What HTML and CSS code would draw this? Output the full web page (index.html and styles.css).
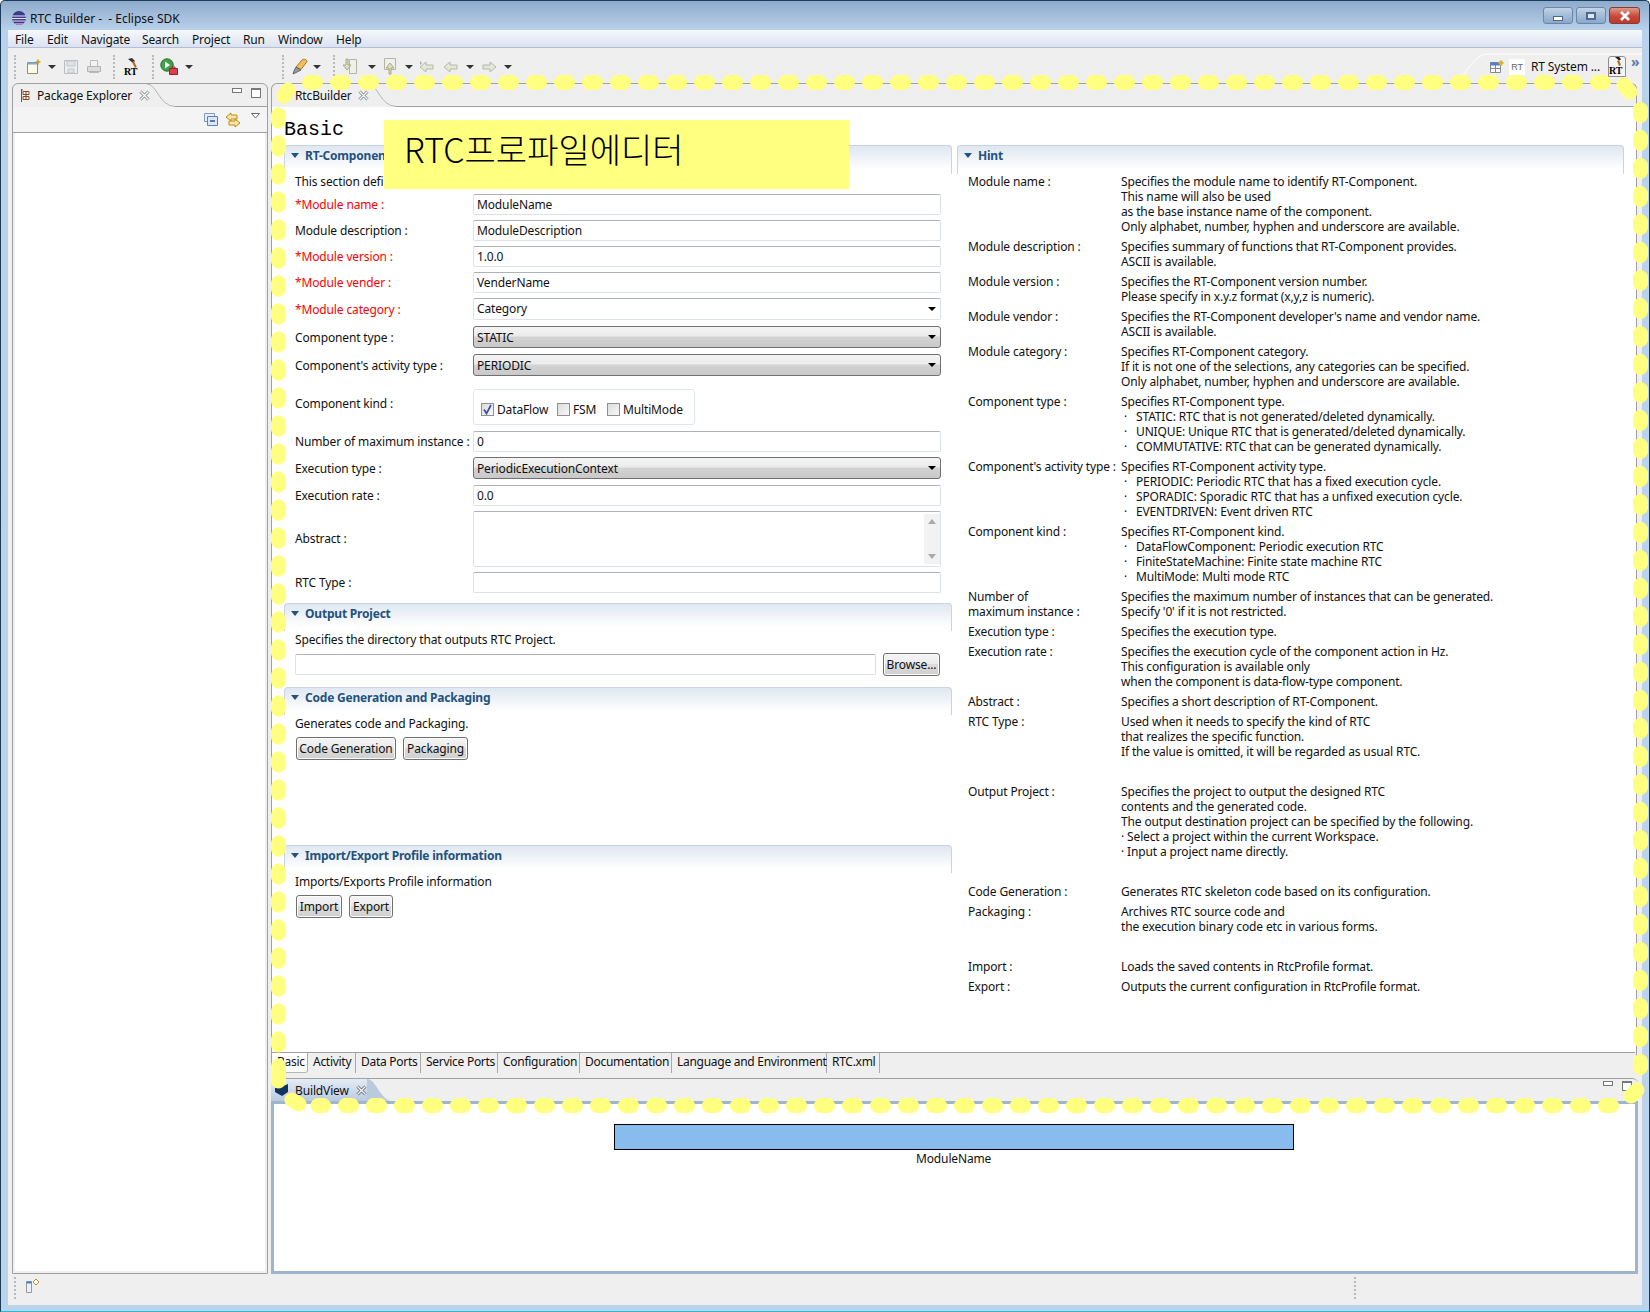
FILE: index.html
```html
<!DOCTYPE html>
<html lang="en">
<head>
<meta charset="utf-8">
<title>RTC Builder - Eclipse SDK</title>
<link rel="stylesheet" href="styles.css">
</head>
<body>
<div class="window">
  <header class="titlebar">
    <svg class="title-icon" width="16" height="16" viewBox="0 0 16 16"><circle cx="8" cy="8" r="7" fill="#3b3a8c"/><path d="M1 6h14M1 8.500h14M1.600 11h12.800" stroke="#e8e4f4" stroke-width="1.100"/><path d="M3 13a7 7 0 0 0 10 0z" fill="#b08fc8"/></svg>
    <span class="title-text">RTC Builder -&nbsp;&nbsp;- Eclipse SDK</span>
    <div class="winbtns">
      <div class="winbtn"><span class="glyph-min"></span></div>
      <div class="winbtn"><span class="glyph-max"></span></div>
      <div class="winbtn winbtn-close"><svg width="14" height="10" viewBox="0 0 14 10"><path d="M3 1l8 8M11 1l-8 8" stroke="#fff" stroke-width="2.600"/></svg></div>
    </div>
  </header>
  <nav class="menubar">
    <span class="m-file">File</span><span class="m-edit">Edit</span><span class="m-nav">Navigate</span><span class="m-search">Search</span><span class="m-project">Project</span><span class="m-run">Run</span><span class="m-window">Window</span><span>Help</span>
  </nav>
  <div class="toolbar">
    <i class="grip"></i>
    <svg class="ti" width="16" height="16" viewBox="0 0 16 16"><path d="M1.500 3.500h10v11h-10z" fill="#fdfbe8" stroke="#8a8f6a"/><path d="M1.500 3.500h10v2h-10z" fill="#7fa6d8"/><path d="M12 .5v5M9.500 3h5" stroke="#d09a20" stroke-width="1.600"/></svg>
    <i class="drop d1"></i>
    <svg class="ti t-save" width="16" height="16" viewBox="0 0 16 16"><path d="M1.500 1.500h13v13h-13z" fill="#eceff0" stroke="#b8bcbf"/><path d="M4 2h8v5H4zM5 10h6v4H5z" fill="#dfe2e4" stroke="#c2c5c8"/></svg>
    <svg class="ti t-print" width="16" height="16" viewBox="0 0 16 16"><path d="M4.500 1.500h7v6h-7z" fill="#f2f2f2" stroke="#bbb"/><path d="M1.500 7.500h13v5h-13z" fill="#dcdcdc" stroke="#b5b5b5"/><path d="M3 13.500h10" stroke="#bbb"/></svg>
    <i class="grip g2"></i>
    <svg class="ti t-rt" width="18" height="18" viewBox="0 0 18 18"><path d="M5 1l4-1 3 3-2 2z" fill="#333"/><path d="M9 4l1.800-1 3 6-1.800 1z" fill="#b8692a"/><text x="1" y="17" class="rt-mark">RT</text></svg>
    <i class="grip g3"></i>
    <svg class="ti t-run" width="19" height="18" viewBox="0 0 19 18"><circle cx="7" cy="7" r="6.200" fill="#3fa24a" stroke="#1f6e2c"/><path d="M5 3.600l5 3.400-5 3.400z" fill="#fff"/><path d="M9.500 10.500h8v6h-8z" fill="#d8414a" stroke="#922"/><path d="M12 10.500V9h3v1.500" fill="none" stroke="#922"/></svg>
    <i class="drop d2"></i>
    <i class="grip g4"></i>
    <svg class="ti t-pin" width="18" height="17" viewBox="0 0 18 17"><path d="M5 9l6-7c2-1.500 5-.5 5 1.500l-6 8z" fill="#f0c060" stroke="#a77a20"/><path d="M5 9l5 3-5 2.500-3 1.500 1-3z" fill="#9a9aa0" stroke="#666"/></svg>
    <i class="drop d3"></i>
    <i class="grip g5"></i>
    <svg class="ti t-a" width="15" height="17" viewBox="0 0 15 17"><path d="M6.500 1.500h7v14h-7z" fill="#f0f0ea" stroke="#b5b5a5"/><path d="M5 1v6h3l-4 5-4-5h3V1z" fill="#dfe0c0" stroke="#a8a88a"/></svg>
    <i class="drop d4"></i>
    <svg class="ti t-b" width="15" height="17" viewBox="0 0 15 17"><path d="M2.500 .5h11v11h-11z" fill="#f0f0ea" stroke="#b5b5a5"/><path d="M7 16v-6H4l4-5 4 5H9v6z" fill="#dfe0c0" stroke="#a8a88a"/></svg>
    <i class="drop d5"></i>
    <svg class="ti t-c" width="16" height="14" viewBox="0 0 16 14"><path d="M8 2L2 7l6 5V9h7V5H8z" fill="#e4e8d8" stroke="#b4b8a8"/><path d="M2 1l2 2-2 2" fill="#aaa"/></svg>
    <svg class="ti t-d" width="15" height="14" viewBox="0 0 15 14"><path d="M7 2L1 7l6 5V9h7V5H7z" fill="#e4e8d8" stroke="#b4b8a8"/></svg>
    <i class="drop d6"></i>
    <svg class="ti t-e" width="15" height="14" viewBox="0 0 15 14"><path d="M8 2l6 5-6 5V9H1V5h7z" fill="#e4e8d8" stroke="#b4b8a8"/></svg>
    <i class="drop d7"></i>
    <div class="perspective">
      <svg class="persp-curve" width="190" height="32" viewBox="0 0 190 32"><path d="M0 31c14 0 18-26 36-27h154" fill="none" stroke="#fff" stroke-width="1"/></svg>
      <svg class="persp-ico" width="14" height="13" viewBox="0 0 14 13"><path d="M.5 2.500h10v10H.500z" fill="#fff" stroke="#888"/><path d="M.5 2.500h10v3H.5z" fill="#4f81c8"/><path d="M5.500 5v7M1 8.500h9" stroke="#888"/><path d="M11 0l3 3-3 3-3-3z" fill="#e0b030"/></svg>
      <span class="rt-chip">RT</span>
      <span class="persp-label">RT System ...</span>
      <span class="persp-btn"><svg width="16" height="18" viewBox="0 0 16 18"><path d="M6 0l4-.5 2 3-2 1z" fill="#222"/><path d="M8 4l2-1 2 5-2 1z" fill="#b8692a"/><text x="0" y="17" class="rt-mark">RT</text></svg></span>
      <span class="persp-more">»</span>
    </div>
  </div>

  <div class="workbench">
    <section class="pane pane-left">
      <div class="pane-head">
        <div class="tab">
          <svg class="pkg-ico" width="10" height="13" viewBox="0 0 10 13"><path d="M1.500 0v13M1 1h2M3 2.500h6v3H3zM3 7.500h6v3H3zM6 2.500v8" fill="none" stroke="#8a4a28"/></svg>
          <span>Package Explorer</span>
          <svg class="close-x" width="11" height="11" viewBox="0 0 11 11"><path d="M1.500 1.500l8 8M9.500 1.500l-8 8" stroke="#7f8a8f" stroke-width="3"/><path d="M1.500 1.500l8 8M9.500 1.500l-8 8" stroke="#fff" stroke-width="1.200"/></svg>
        </div>
        <svg class="tab-curve" width="28" height="23" viewBox="0 0 28 23"><path d="M0 0c10 0 12 22 28 22.500" fill="none" stroke="#b5b5b5"/></svg>
        <div class="head-fill">
          <span class="btn-min"></span><span class="btn-max"></span>
        </div>
      </div>
      <div class="pane-tools">
        <svg width="14" height="13" viewBox="0 0 14 13"><path d="M.5.5h10v8h-10z" fill="#e8eef6" stroke="#7f9bc0"/><path d="M3.500 3.500h10v9h-10z" fill="#dbe7f5" stroke="#5c82b5"/><path d="M6 8h5" stroke="#234a80" stroke-width="1.400"/></svg>
        <svg class="link-ico" width="16" height="16" viewBox="0 0 16 16"><path d="M6 1L1 5l5 4V7h6V3H6z" fill="#fbe8a8" stroke="#c08a18"/><path d="M10 7l5 4-5 4v-2H4V9h6z" fill="#fbe8a8" stroke="#c08a18"/></svg>
        <svg class="menu-tri" width="9" height="6" viewBox="0 0 9 6"><path d="M.5.500h8L4.500 5z" fill="#fff" stroke="#666"/></svg>
      </div>
      <div class="pane-body"></div>
    </section>

    <div class="right-stack">
      <section class="pane pane-editor">
        <div class="pane-head">
          <div class="tab tab-editor">
            <svg class="ed-ico" width="12" height="12" viewBox="0 0 12 12"><path d="M2 10l6-7 2 2-6 6z" fill="#c88a30"/></svg>
            <span>RtcBuilder</span>
            <svg class="close-x" width="11" height="11" viewBox="0 0 11 11"><path d="M1.500 1.500l8 8M9.500 1.500l-8 8" stroke="#7f8a8f" stroke-width="3"/><path d="M1.500 1.500l8 8M9.500 1.500l-8 8" stroke="#fff" stroke-width="1.200"/></svg>
          </div>
          <svg class="tab-curve" width="28" height="23" viewBox="0 0 28 23"><path d="M0 0c10 0 12 22 28 22.500" fill="none" stroke="#b5b5b5"/></svg>
          <div class="head-fill"></div>
        </div>
        <div class="form-page">
          <h1 class="page-title">Basic</h1>
          <div class="columns">
            <div class="col-left">
              <section class="sec">
                <h2 class="sec-head sec-head-first"><i class="twist"></i>RT-Component Basic Profile</h2>
                <p class="sec-desc">This section defines basic profile</p>
                <div class="row"><label class="req">*Module name :</label><div class="field">ModuleName</div></div>
                <div class="row"><label>Module description :</label><div class="field">ModuleDescription</div></div>
                <div class="row"><label class="req">*Module version :</label><div class="field">1.0.0</div></div>
                <div class="row"><label class="req">*Module vender :</label><div class="field">VenderName</div></div>
                <div class="row row-c"><label class="req">*Module category :</label><div class="field combo-edit">Category<i class="arrow"></i></div></div>
                <div class="row row-c"><label>Component type :</label><div class="combo">STATIC<i class="arrow"></i></div></div>
                <div class="row row-c row-before-group"><label>Component's activity type :</label><div class="combo">PERIODIC<i class="arrow"></i></div></div>
                <div class="row row-group"><label class="lab-group">Component kind :</label>
                  <div class="group">
                    <span class="check on"><svg width="11" height="11" viewBox="0 0 11 11"><path d="M2 5.500l2.500 4L9 1" fill="none" stroke="#3a4fa0" stroke-width="1.700"/></svg></span><span class="ck-l1">DataFlow</span>
                    <span class="check"></span><span class="ck-l2">FSM</span>
                    <span class="check"></span><span>MultiMode</span>
                  </div>
                </div>
                <div class="row"><label>Number of maximum instance :</label><div class="field">0</div></div>
                <div class="row row-c"><label>Execution type :</label><div class="combo">PeriodicExecutionContext<i class="arrow"></i></div></div>
                <div class="row"><label>Execution rate :</label><div class="field">0.0</div></div>
                <div class="row row-area"><label class="lab-area">Abstract :</label><div class="field area"><div class="vscroll"><i class="up"></i><i class="down"></i></div></div></div>
                <div class="row row-last"><label>RTC Type :</label><div class="field"></div></div>
              </section>
              <section class="sec sec-output">
                <h2 class="sec-head"><i class="twist"></i>Output Project</h2>
                <p class="sec-desc">Specifies the directory that outputs RTC Project.</p>
                <div class="browse-row"><div class="field grow"></div><button class="btn btn-browse">Browse...</button></div>
              </section>
              <section class="sec sec-code">
                <h2 class="sec-head"><i class="twist"></i>Code Generation and Packaging</h2>
                <p class="sec-desc">Generates code and Packaging.</p>
                <div class="btn-row"><button class="btn b-code">Code Generation</button><button class="btn b-pack">Packaging</button></div>
              </section>
              <section class="sec">
                <h2 class="sec-head"><i class="twist"></i>Import/Export Profile information</h2>
                <p class="sec-desc">Imports/Exports Profile information</p>
                <div class="btn-row"><button class="btn b-imp">Import</button><button class="btn b-exp">Export</button></div>
              </section>
            </div>
            <section class="sec col-right">
              <h2 class="sec-head sec-head-first"><i class="twist"></i>Hint</h2>
              <dl class="hints">
                <dt>Module name :</dt><dd>Specifies the module name to identify RT-Component.<br>This name will also be used<br>as the base instance name of the component.<br>Only alphabet, number, hyphen and underscore are available.</dd>
                <dt>Module description :</dt><dd>Specifies summary of functions that RT-Component provides.<br>ASCII is available.</dd>
                <dt>Module version :</dt><dd>Specifies the RT-Component version number.<br>Please specify in x.y.z format (x,y,z is numeric).</dd>
                <dt>Module vendor :</dt><dd>Specifies the RT-Component developer's name and vendor name.<br>ASCII is available.</dd>
                <dt>Module category :</dt><dd>Specifies RT-Component category.<br>If it is not one of the selections, any categories can be specified.<br>Only alphabet, number, hyphen and underscore are available.</dd>
                <dt>Component type :</dt><dd>Specifies RT-Component type.<br>&nbsp;·&nbsp;&nbsp;&nbsp;STATIC: RTC that is not generated/deleted dynamically.<br>&nbsp;·&nbsp;&nbsp;&nbsp;UNIQUE: Unique RTC that is generated/deleted dynamically.<br>&nbsp;·&nbsp;&nbsp;&nbsp;COMMUTATIVE: RTC that can be generated dynamically.</dd>
                <dt>Component's activity type :</dt><dd>Specifies RT-Component activity type.<br>&nbsp;·&nbsp;&nbsp;&nbsp;PERIODIC: Periodic RTC that has a fixed execution cycle.<br>&nbsp;·&nbsp;&nbsp;&nbsp;SPORADIC: Sporadic RTC that has a unfixed execution cycle.<br>&nbsp;·&nbsp;&nbsp;&nbsp;EVENTDRIVEN: Event driven RTC</dd>
                <dt>Component kind :</dt><dd>Specifies RT-Component kind.<br>&nbsp;·&nbsp;&nbsp;&nbsp;DataFlowComponent: Periodic execution RTC<br>&nbsp;·&nbsp;&nbsp;&nbsp;FiniteStateMachine: Finite state machine RTC<br>&nbsp;·&nbsp;&nbsp;&nbsp;MultiMode: Multi mode RTC</dd>
                <dt>Number of<br>maximum instance :</dt><dd>Specifies the maximum number of instances that can be generated.<br>Specify '0' if it is not restricted.</dd>
                <dt>Execution type :</dt><dd>Specifies the execution type.</dd>
                <dt>Execution rate :</dt><dd>Specifies the execution cycle of the component action in Hz.<br>This configuration is available only<br>when the component is data-flow-type component.</dd>
                <dt>Abstract :</dt><dd>Specifies a short description of RT-Component.</dd>
                <dt>RTC Type :</dt><dd>Used when it needs to specify the kind of RTC<br>that realizes the specific function.<br>If the value is omitted, it will be regarded as usual RTC.</dd>
                <dt class="spacer"></dt><dd class="spacer"></dd>
                <dt>Output Project :</dt><dd>Specifies the project to output the designed RTC<br>contents and the generated code.<br>The output destination project can be specified by the following.<br>·&nbsp;Select a project within the current Workspace.<br>·&nbsp;Input a project name directly.</dd>
                <dt class="spacer"></dt><dd class="spacer"></dd>
                <dt>Code Generation :</dt><dd>Generates RTC skeleton code based on its configuration.</dd>
                <dt>Packaging :</dt><dd>Archives RTC source code and<br>the execution binary code etc in various forms.</dd>
                <dt class="spacer"></dt><dd class="spacer"></dd>
                <dt>Import :</dt><dd>Loads the saved contents in RtcProfile format.</dd>
                <dt>Export :</dt><dd>Outputs the current configuration in RtcProfile format.</dd>
              </dl>
            </section>
          </div>
        </div>
        <div class="page-tabs">
          <span class="ptab ptab-on t1">Basic</span><span class="ptab t2">Activity</span><span class="ptab t3">Data Ports</span><span class="ptab t4">Service Ports</span><span class="ptab t5">Configuration</span><span class="ptab t6">Documentation</span><span class="ptab t7">Language and Environment</span><span class="ptab t8">RTC.xml</span>
        </div>
      </section>

      <section class="pane pane-build">
        <div class="pane-head build-head">
          <div class="tab tab-build">
            <svg class="build-ico" width="16" height="14" viewBox="0 0 16 14"><path d="M1 1l6 3 7-3v8l-6 4-7-4z" fill="#14335c"/></svg>
            <span>BuildView</span>
            <svg class="close-x" width="11" height="11" viewBox="0 0 11 11"><path d="M1.500 1.500l8 8M9.500 1.500l-8 8" stroke="#667" stroke-width="3"/><path d="M1.500 1.500l8 8M9.500 1.500l-8 8" stroke="#fff" stroke-width="1.200"/></svg>
          </div>
          <svg class="tab-curve" width="28" height="23" viewBox="0 0 28 23"><path d="M0 0c10 0 12 22 28 23H0z" fill="#b9cadf"/></svg>
          <div class="head-fill head-fill-build"><span class="btn-min"></span><span class="btn-max"></span></div>
        </div>
        <div class="build-body">
          <div class="module-box"></div>
          <div class="module-name">ModuleName</div>
        </div>
      </section>
    </div>
  </div>

  <footer class="statusbar">
    <i class="grip grip-s"></i>
    <svg class="status-ico" width="16" height="14" viewBox="0 0 16 14"><path d="M.5 2.500h5v11h-5z" fill="#e8f2fb" stroke="#999"/><path d="M.5 2.500h5v2h-5z" fill="#4f81c8"/><path d="M10 0l3 3-3 3-3-3z" fill="#fff" stroke="#c09020"/></svg>
    <i class="grip grip-r"></i>
  </footer>
</div>

<div class="callout">RTC프로파일에디터</div>
<svg class="dashes" width="1650" height="1312" viewBox="0 0 1650 1312">
  <path class="dash" d="M309.500 82.500H1612"/>
  <path class="dash" d="M1640.500 109.500V1076"/>
  <path class="dash" d="M1611.500 1105.500H318"/>
  <path class="dash" d="M278.500 115V1050"/>
  <path class="dash-solid" d="M1624 85L1630 92M1631 1096L1637 1090M284 96L288 90M278.500 1066V1081M292 1100L299 1104"/>
</svg>
</body>
</html>
```

FILE: styles.css
```css
* { box-sizing: border-box; }
html, body { margin: 0; padding: 0; }
body {
  width: 1650px; height: 1312px; overflow: hidden; position: relative;
  background: #fff;
  font: 12px/15px "Noto Sans", "Liberation Sans", sans-serif;
  letter-spacing: -0.14px;
  white-space: nowrap;
  color: #111;
}
.window {
  width: 1650px; height: 1312px; display: flex; flex-direction: column;
  padding: 1px 7px 0 7px;
  background: linear-gradient(180deg, #8fabcc 0, #b9d2ec 30px, #bcd3ec 100%);
  border-left: 1px solid #1c3b58; border-top: 1px solid #1c3b58; border-right: 1px solid #1c3b58;
  border-bottom: 1px solid #19c2dc;
  border-radius: 5px 5px 0 0;
}
.titlebar { height: 28px; display: flex; align-items: center; padding: 4px 2px 0 3px; flex: none; }
.title-icon { margin-right: 3px; }
.title-text { font-size: 12px; letter-spacing: 0; }
.winbtns { margin-left: auto; display: flex; gap: 3px; margin-right: 0; margin-top: -5px; }
.winbtn {
  width: 30px; height: 17px; border: 1px solid #6b86a6; border-radius: 3px;
  background: linear-gradient(180deg, #c3d3e6, #a3bcd8 50%, #8ba8c9);
  display: flex; align-items: center; justify-content: center;
}
.winbtn-close { width: 31px; border-color: #8c3a30; background: linear-gradient(180deg, #dc9a8c, #c8493a 55%, #b83a2c); }
.glyph-min { width: 10px; height: 5px; background: #fff; border: 1px solid #4d6a8c; margin-top: 5px; }
.glyph-max { width: 10px; height: 8px; background: #dce8f4; border: 2px solid #4d6a8c; }
.menubar {
  height: 18px; flex: none; display: flex; align-items: center; padding: 2px 0 0 7px; gap: 0;
  background: linear-gradient(180deg, #f6f8fc, #dbe3f1);
  border-bottom: 1px solid #b5bed4;
}
.menubar span { display: block; }
.m-file { width: 32px; } .m-edit { width: 34px; } .m-nav { width: 61px; } .m-search { width: 50px; }
.m-project { width: 51px; } .m-run { width: 35px; } .m-window { width: 58px; }
.toolbar { height: 35px; flex: none; background: #efefef; display: flex; align-items: center; position: relative; padding: 2px 0 0 6px; }
.grip { display: block; width: 2px; height: 24px; border-left: 2px dotted #b9b9b9; flex: none; }
.ti { flex: none; margin-left: 10px; }
.drop { display: block; width: 0; height: 0; border: 4px solid transparent; border-top: 4px solid #333; border-bottom: 0; margin-left: 6px; flex: none; }
.t-save { margin-left: 7px; } .t-print { margin-left: 7px; }
.g2 { margin-left: 11px; } .t-rt { margin-left: 8px; } .g3 { margin-left: 11px; } .t-run { margin-left: 6px; }
.d2 { margin-left: 6px; } .g4 { margin-left: 89px; } .t-pin { margin-left: 7px; } .d3 { margin-left: 4px; }
.g5 { margin-left: 12px; } .t-a { margin-left: 8px; } .d4 { margin-left: 10px; } .t-b { margin-left: 6px; }
.d5 { margin-left: 8px; } .t-c { margin-left: 5px; } .t-d { margin-left: 9px; } .d6 { margin-left: 8px; }
.t-e { margin-left: 8px; } .d7 { margin-left: 7px; }
.rt-mark { font: bold 10px "Liberation Serif", serif; fill: #000; letter-spacing: 0; }
.perspective { margin-left: auto; height: 100%; display: flex; align-items: center; padding-right: 2px; position: relative; }
.persp-curve { position: absolute; right: 0; top: 0; }
.persp-ico { position: relative; }
.rt-chip { width: 16px; height: 16px; margin-left: 5px; background: #fff; color: #666; font: 9px/16px "Liberation Sans", sans-serif; text-align: center; position: relative; }
.persp-label { margin-left: 6px; width: 77px; position: relative; }
.persp-btn { width: 18px; height: 21px; border: 1px solid #8f8f8f; border-radius: 3px 3px 0 0; background: #f5f5f5; display: block; position: relative; overflow: hidden; }
.persp-more { font-size: 14px; font-weight: 700; margin-left: 5px; margin-top: -10px; color: #5b7ab0; width: 9px; line-height: 12px; }

.workbench { flex: 1; min-height: 0; display: flex; gap: 3px; background: #efefef; padding-left: 4px; padding-right: 4px; }
.pane { display: flex; flex-direction: column; border: 1px solid #a0a0a0; border-radius: 6px 6px 0 0; background: #efefef; }
.pane-left { width: 256px; flex: none; height: 1191px; }
.pane-head { height: 23px; flex: none; display: flex; align-items: stretch; }
.tab { display: flex; align-items: center; padding-left: 7px; }
.tab > span { margin-left: 7px; }
.pkg-ico { flex: none; }
.close-x { margin-left: 7px; flex: none; }
.pane-left .tab { width: 134px; }
.tab-curve { flex: none; }
.head-fill { flex: 1; border-bottom: 1px solid #a0a0a0; display: flex; justify-content: flex-end; gap: 9px; padding: 4px 6px 0 0; }
.btn-min { width: 10px; height: 5px; border: 1px solid #777; background: #fff; display: block; }
.btn-max { width: 10px; height: 10px; border: 1px solid #777; border-top-width: 2px; background: #fff; display: block; }
.pane-tools { height: 26px; flex: none; display: flex; align-items: center; justify-content: flex-end; background: #f4f4f4; border-bottom: 1px solid #a0a0a0; padding-right: 7px; }
.link-ico { margin-left: 7px; }
.menu-tri { margin-left: 10px; margin-top: -8px; }
.pane-body { flex: 1; background: #fff; border: 2px solid #efefef; border-top: 0; }
.right-stack { flex: 1; min-width: 0; display: flex; flex-direction: column; gap: 6px; height: 1191px; }
.pane-editor { height: 989px; flex: none; padding-bottom: 20px; position: relative; border-bottom: 0; width: 1366px; }
.tab-editor { width: 96px; padding-left: 4px; }
.ed-ico { flex: none; }
.tab-editor > span { margin-left: 7px; }
.tab-editor .close-x { margin-left: 6px; }
.form-page { flex: 1; background: #fff; padding: 13px 12px 0 12px; border-top: 0; }
.page-title { margin: 0; font: normal 20px/20px "Liberation Mono", monospace; letter-spacing: 0; color: #000; height: 25px; }
.columns { display: grid; grid-template-columns: 668px 667px; column-gap: 5px; }
.sec { border-radius: 4px 4px 0 0; }
.sec-head {
  margin: 0; height: 28px; padding: 2px 0 0 6px; display: flex; align-items: flex-start; gap: 6px;
  font: bold 12px/15px "Noto Sans", "Liberation Sans", sans-serif; letter-spacing: -0.2px; color: #23527f;
  background: linear-gradient(180deg, #dfe7f1, #ffffff 85%);
  border: 1px solid #c6d4e4; border-bottom: 0; border-radius: 4px 4px 0 0;
}
.sec-head-first { height: 29px; }
.twist { display: block; width: 0; height: 0; margin-top: 5px; border: 4.500px solid transparent; border-top: 5px solid #23527f; border-bottom: 0; }
.sec-desc { margin: 0 0 5px 11px; height: 15px; }
.row { display: grid; grid-template-columns: 178px 468px; height: 21px; margin: 0 0 5px 11px; align-items: center; }
.row label { display: block; }
.req { color: #f00; }
.row-c { height: 22px; margin-bottom: 6px; }
.row-before-group { margin-bottom: 13px; }
.row-group { height: 36px; margin-bottom: 6px; align-items: start; }
.lab-group { margin-top: 7px; }
.row-area { height: 56px; }
.lab-area { margin-top: -2px; }
.row-last { margin-bottom: 10px; }
.field {
  height: 100%; background: #fff; padding: 2px 0 0 3px; position: relative;
  border: 1px solid #dbe2ea; border-top-color: #aeb2ba; border-radius: 2px;
}
.combo-edit { padding-top: 2px; }
.area { padding: 0; }
.combo {
  height: 100%; padding: 3px 0 0 3px; position: relative;
  background: linear-gradient(180deg, #f4f4f4, #ebebeb 45%, #d3d3d3 50%, #c9c9c9);
  border: 1px solid #707070; border-radius: 3px;
}
.arrow { position: absolute; right: 4px; top: 8px; width: 0; height: 0; border: 4px solid transparent; border-top: 4px solid #000; border-bottom: 0; }
.group { display: flex; align-items: center; width: 222px; height: 36px; padding: 5px 0 0 7px; background: #fff; border: 1px solid #dfe6ef; border-radius: 3px; }
.check { display: block; width: 13px; height: 13px; border: 1px solid #8e8f8f; background: linear-gradient(135deg, #dcdcdc, #f8f8f8); margin-right: 3px; flex: none; padding: 0; }
.check svg { display: block; }
.ck-l1 { width: 60px; } .ck-l2 { width: 34px; }
.vscroll { position: absolute; right: 0; top: 2px; bottom: 2px; width: 16px; background: #f2f2f2; }
.up { position: absolute; left: 4px; top: 5px; border: 4px solid transparent; border-bottom: 5px solid #aaa; border-top: 0; }
.down { position: absolute; left: 4px; bottom: 5px; border: 4px solid transparent; border-top: 5px solid #aaa; border-bottom: 0; }
.browse-row { display: flex; margin-left: 11px; height: 23px; align-items: center; margin-right: 11px; margin-top: 6px; }
.grow { flex: none; width: 581px; height: 21px; margin-top: 0; }
.sec-output .sec-desc { margin-top: 1px; margin-bottom: 0; }
.sec-output { height: 84px; }
.sec-code { height: 158px; }
.sec-code .sec-desc, .col-left .sec:last-child .sec-desc { margin-top: 1px; margin-bottom: 0; }
.btn {
  font: 12px/15px "Noto Sans", "Liberation Sans", sans-serif; letter-spacing: -0.14px; color: #111; padding: 0; height: 23px;
  background: linear-gradient(180deg, #f4f4f4, #ececec 45%, #dcdcdc 50%, #cfcfcf);
  border: 1px solid #707070; border-radius: 3px;
  box-shadow: inset 0 0 0 1px #fbfbfb;
}
.btn-browse { width: 57px; margin-left: 7px; }
.btn-row { display: flex; gap: 7px; margin: 6px 0 0 12px; }
.b-code { width: 100px; } .b-pack { width: 65px; } .b-imp { width: 46px; } .b-exp { width: 44px; }
.hints { margin: 0 0 0 11px; display: grid; grid-template-columns: 153px 1fr; row-gap: 5px; }
.hints dt, .hints dd { margin: 0; min-height: 15px; white-space: nowrap; }
.page-tabs { position: absolute; left: 0; right: 1px; bottom: 0; height: 20px; display: flex; background: #efefef; border-top: 1px solid #a0a0a0; border-bottom: 0; letter-spacing: -0.28px; }
.ptab { display: flex; align-items: center; padding: 0 0 3px 5px; border-right: 1px solid #a9a9a9; height: 20px; flex: none; }
.ptab-on { background: #fff; border-radius: 0 0 3px 3px; border-bottom: 1px solid #b5b5b5; }
.t1 { width: 36px; } .t2 { width: 48px; } .t3 { width: 65px; } .t4 { width: 77px; } .t5 { width: 82px; }
.t6 { width: 92px; } .t7 { width: 155px; } .t8 { width: 53px; }
.pane-build { height: 196px; flex: none; width: 1367px; border: 0; border-top: 1px solid #a0a0a0; border-radius: 6px 6px 0 0; background: #efefef; }
.build-head { height: 22px; }
.tab-build { width: 96px; padding-left: 3px; background: linear-gradient(180deg, #e4ecf5, #b9cadf); border-radius: 6px 0 0 0; }
.tab-build > span { margin-left: 5px; }
.build-ico { flex: none; }
.head-fill-build { border-bottom: 0; padding-top: 2px; }
.build-body { flex: 1; background: #fff; border: 3px solid #9fb4cd; position: relative; display: flex; flex-direction: column; align-items: flex-start; padding: 20px 0 0 340px; }
.module-box { width: 680px; height: 26px; background: #88bbee; border: 1.500px solid #000; flex: none; }
.module-name { margin: 1px 0 0 302px; }
.statusbar { height: 30px; flex: none; background: #efefef; display: flex; align-items: center; padding-left: 6px; margin-bottom: 6px; }
.grip-s { height: 22px; margin: -4px 10px 0 0; }
.status-ico { margin-top: -8px; }
.grip-r { margin: -4px 0 0 1312px; height: 22px; }

.callout {
  position: absolute; left: 384px; top: 120px; width: 465px; height: 69px;
  background: #ffff80; padding: 5px 0 0 20px; color: #000; letter-spacing: 0;
  font: 300 34px/48px "Noto Sans CJK KR", "Noto Sans", sans-serif;
}
.dashes { position: absolute; left: 0; top: 0; pointer-events: none; }
.dash { fill: none; stroke: #ffff80; stroke-width: 15; stroke-linecap: round; stroke-dasharray: 6 22; }
.dash-solid { fill: none; stroke: #ffff80; stroke-width: 15; stroke-linecap: round; }
```
